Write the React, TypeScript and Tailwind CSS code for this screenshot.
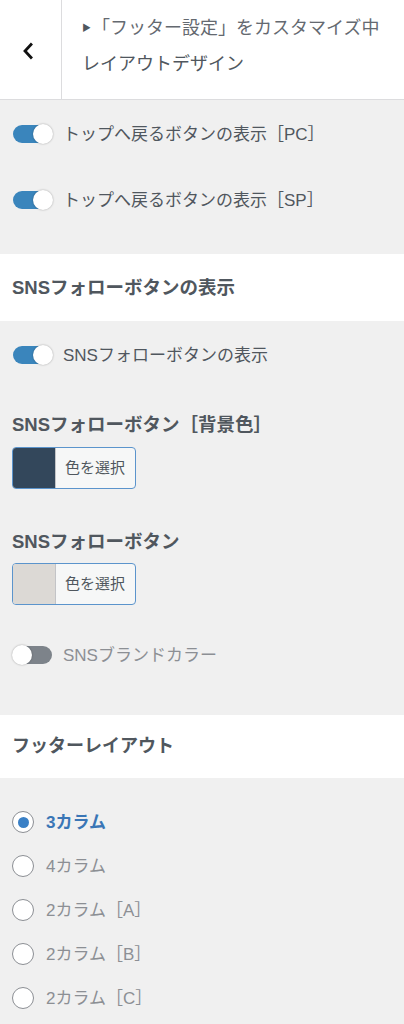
import React from "react";

const FONT = { fontFamily: '"Liberation Sans", "Noto Sans CJK JP", sans-serif' };

function Toggle({ on }: { on: boolean }) {
  return (
    <span
      className={`relative inline-block w-[39px] h-[18px] rounded-full shrink-0 ${
        on ? "bg-[#3a85bc]" : "bg-[#7d838a]"
      }`}
    >
      <span
        className={`absolute top-[-1px] w-[20px] h-[20px] rounded-full bg-white shadow-[0_0_2px_rgba(0,0,0,0.35)] ${
          on ? "right-[-1px]" : "left-[-1px]"
        }`}
      />
    </span>
  );
}

function ToggleRow({ on, label, dim }: { on: boolean; label: string; dim?: boolean }) {
  return (
    <div className="flex items-center h-[34px] pl-[13px]">
      <Toggle on={on} />
      <span className={`ml-[11px] text-[17px] leading-none ${dim ? "text-[#8c8f94]" : "text-[#50575e]"}`}>
        {label}
      </span>
    </div>
  );
}

function ColorButton({ color }: { color: string }) {
  return (
    <div className="ml-[12px] flex w-[124px] h-[42px] rounded-[4px] border border-[#5b94cc] overflow-hidden bg-[#f6f7f7]">
      <div className={`w-[43px] h-full border-r border-[#c3c4c7] ${color}`} />
      <div className="flex-1 flex items-center pl-[9px] text-[15px] text-[#50575e]">色を選択</div>
    </div>
  );
}

function Radio({ checked, label }: { checked?: boolean; label: string }) {
  return (
    <div className="flex items-center h-[44px] pl-[12px]">
      <span className="w-[22px] h-[22px] rounded-full border-[1.5px] border-[#8c8f94] bg-white flex items-center justify-center shrink-0">
        {checked && <span className="w-[11px] h-[11px] rounded-full bg-[#3a80c6]" />}
      </span>
      <span
        className={`ml-[12px] text-[17px] leading-none ${
          checked ? "text-[#3a76b6] font-bold" : "text-[#8c8f94]"
        }`}
      >
        {label}
      </span>
    </div>
  );
}

export default function App() {
  return (
    <div className="w-[404px] h-[1024px] overflow-hidden bg-[#f0f0f0]" style={FONT}>
      {/* Header */}
      <div className="flex h-[100px] bg-white border-b border-[#dcdcde]">
        <div className="w-[62px] border-r border-[#dcdcde] flex items-center justify-center">
          <svg width="14" height="18" viewBox="0 0 14 18" className="ml-[-5px] mt-[2px]">
            <path d="M10 2.5 L4 9 L10 15.5" fill="none" stroke="#111" strokeWidth="2.8" strokeLinecap="square" />
          </svg>
        </div>
        <div className="flex flex-col pl-[20px] pt-[10px]">
          <div className="flex items-center h-[36px] text-[18px] text-[#646970] leading-none">
            <span className="text-[9px] text-[#50575e] mr-[1px]">▶</span>
            <span>「フッター設定」をカスタマイズ中</span>
          </div>
          <div className="flex items-center h-[36px] text-[18px] text-[#50575e] leading-none">
            レイアウトデザイン
          </div>
        </div>
      </div>

      {/* Section 1 */}
      <div className="flex flex-col pt-[17px] pb-[37px] gap-[32px]">
        <ToggleRow on label="トップへ戻るボタンの表示［PC］" />
        <ToggleRow on label="トップへ戻るボタンの表示［SP］" />
      </div>

      {/* Heading */}
      <div className="h-[67px] bg-white flex items-center pl-[12px]">
        <span className="text-[18.5px] font-bold text-[#50575e]">SNSフォローボタンの表示</span>
      </div>

      {/* Section 2 */}
      <div className="flex flex-col pt-[17px] h-[394px]">
        <ToggleRow on label="SNSフォローボタンの表示" />
        <div className="mt-[40px] h-[26px] flex items-center pl-[12px] text-[18.5px] font-semibold text-[#50575e]">
          SNSフォローボタン［背景色］
        </div>
        <div className="mt-[9px]">
          <ColorButton color="bg-[#33475b]" />
        </div>
        <div className="mt-[40px] h-[26px] flex items-center pl-[12px] text-[18.5px] font-semibold text-[#50575e]">
          SNSフォローボタン
        </div>
        <div className="mt-[8px]">
          <ColorButton color="bg-[#dcd9d5]" />
        </div>
        <div className="mt-[33px]">
          <ToggleRow on={false} dim label="SNSブランドカラー" />
        </div>
      </div>

      {/* Heading 2 */}
      <div className="h-[63px] bg-white flex items-center pl-[12px]">
        <span className="text-[18px] font-bold text-[#50575e]">フッターレイアウト</span>
      </div>

      {/* Radios */}
      <div className="flex flex-col pt-[22px]">
        <Radio checked label="3カラム" />
        <Radio label="4カラム" />
        <Radio label="2カラム［A］" />
        <Radio label="2カラム［B］" />
        <Radio label="2カラム［C］" />
      </div>
    </div>
  );
}
